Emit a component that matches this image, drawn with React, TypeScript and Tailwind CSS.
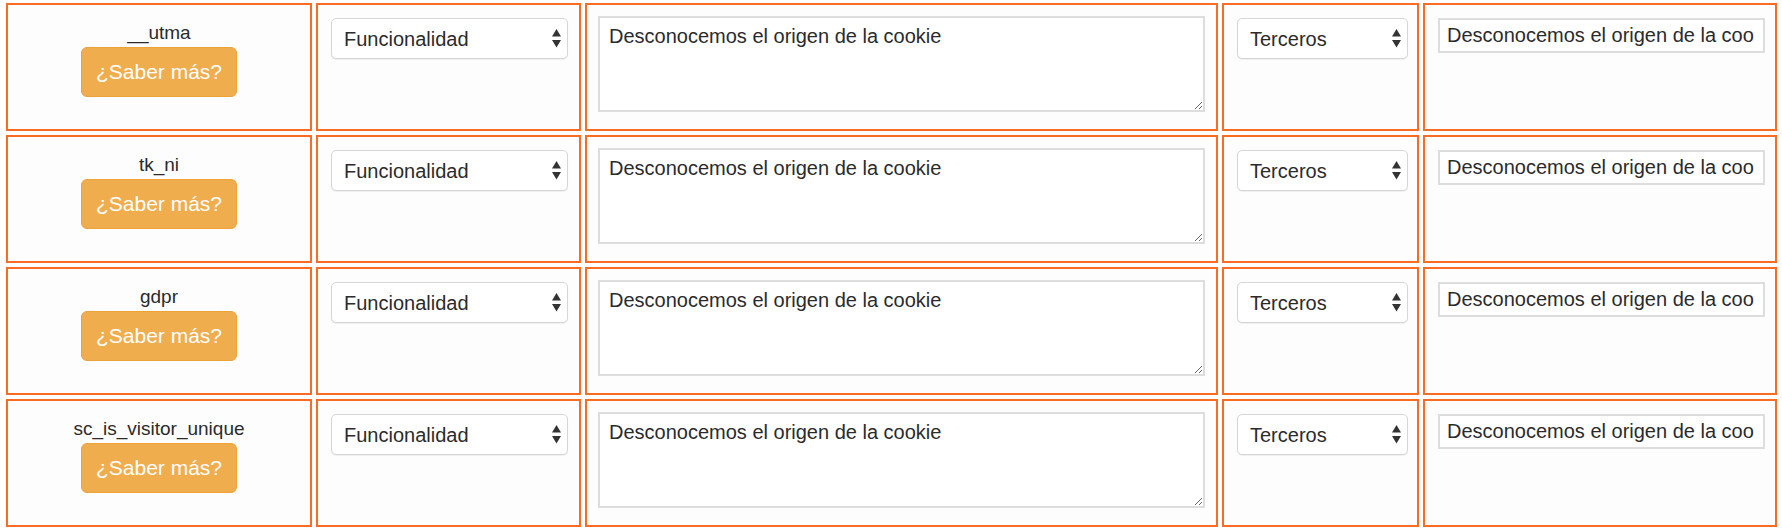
import React from "react";

const cookies = ["__utma", "tk_ni", "gdpr", "sc_is_visitor_unique"];

const desc = "Desconocemos el origen de la cookie";

function SelectBox({ value, width }: { value: string; width: string }) {
  return (
    <div className={`relative ${width} h-[41px]`}>
      <select
        defaultValue={value}
        className="appearance-none w-full h-full rounded-[5px] border border-[#d6d6d6] bg-white pl-[12px] text-[20px] text-[#2b2b2b] shadow-[0_1px_1px_rgba(0,0,0,0.06)] outline-none"
      >
        <option>{value}</option>
      </select>
      <svg
        className="absolute right-[7px] top-[11px] pointer-events-none"
        width="9"
        height="19"
        viewBox="0 0 9 19"
      >
        <polygon points="4.5,0 9,7.5 0,7.5" fill="#333" />
        <polygon points="0,11 9,11 4.5,18.5" fill="#333" />
      </svg>
    </div>
  );
}

function Row({ name }: { name: string }) {
  const cell = "h-[128px] border-2 border-[#fa6b23] bg-[#fdfdfd]";
  return (
    <>
      <div className={`${cell} flex flex-col items-center pt-[15px]`}>
        <div className="text-[19px] leading-[26px] text-[#2b2b2b]">{name}</div>
        <button className="mt-[1px] w-[156px] h-[50px] rounded-[6px] border border-[#eea236] bg-[#f0ad4e] text-white text-[21px]">
          ¿Saber más?
        </button>
      </div>
      <div className={`${cell} pl-[13px] pt-[13px]`}>
        <SelectBox value="Funcionalidad" width="w-[237px]" />
      </div>
      <div className={`${cell} pl-[11px] pt-[11px]`}>
        <textarea
          defaultValue={desc}
          className="block w-[607px] h-[96px] border-2 border-[#dddddd] bg-white px-[9px] pt-[4px] text-[20px] leading-[28px] text-[#2b2b2b] outline-none"
        />
      </div>
      <div className={`${cell} pl-[13px] pt-[13px]`}>
        <SelectBox value="Terceros" width="w-[171px]" />
      </div>
      <div className={`${cell} pl-[13px] pt-[13px]`}>
        <input
          defaultValue={desc}
          className="block w-[327px] h-[35px] border-2 border-[#dddddd] bg-white pl-[7px] pr-[9px] text-[20px] text-[#2b2b2b] outline-none"
        />
      </div>
    </>
  );
}

export default function App() {
  return (
    <div
      className="w-[1782px] h-[532px] bg-white pl-[6px] pt-[3px]"
      style={{ fontFamily: '"Liberation Sans", Arial, sans-serif' }}
    >
      <div className="grid grid-cols-[306px_265px_633px_197px_354px] gap-[4px]">
        {cookies.map((c) => (
          <Row key={c} name={c} />
        ))}
      </div>
    </div>
  );
}
